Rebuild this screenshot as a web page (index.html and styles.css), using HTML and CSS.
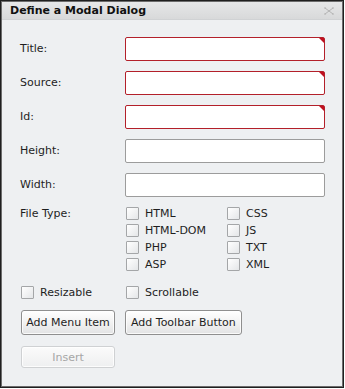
FILE: index.html
```html
<!DOCTYPE html>
<html lang="en">
  <head>
    <meta charset="UTF-8" />
    <title>Define a Modal Dialog</title>
    <link rel="stylesheet" href="styles.css">
  </head>
  <body>
    <div class="dialog">
      <div class="dialog-titlebar">
        <span class="dialog-title">Define a Modal Dialog</span>
        <span class="dialog-close" title="Close">
          <svg width="10" height="8" viewBox="0 0 10 8">
            <path d="M1 1 L9 7 M9 1 L1 7 M0 1 H2 M8 1 H10 M0 7 H2 M8 7 H10" stroke="#b4b4b4" stroke-width="1" fill="none" />
          </svg>
        </span>
      </div>

      <div class="dialog-body">
        <div class="form-row">
          <label class="form-label">Title:</label>
          <div class="field required"><input type="text" /></div>
        </div>
        <div class="form-row">
          <label class="form-label">Source:</label>
          <div class="field required"><input type="text" /></div>
        </div>
        <div class="form-row">
          <label class="form-label">Id:</label>
          <div class="field required"><input type="text" /></div>
        </div>
        <div class="form-row">
          <label class="form-label">Height:</label>
          <div class="field"><input type="text" /></div>
        </div>
        <div class="form-row">
          <label class="form-label">Width:</label>
          <div class="field"><input type="text" /></div>
        </div>

        <div class="form-row file-types">
          <label class="form-label">File Type:</label>
          <div class="check-grid">
            <label class="check"><span class="box"></span>HTML</label>
            <label class="check"><span class="box"></span>CSS</label>
            <label class="check"><span class="box"></span>HTML-DOM</label>
            <label class="check"><span class="box"></span>JS</label>
            <label class="check"><span class="box"></span>PHP</label>
            <label class="check"><span class="box"></span>TXT</label>
            <label class="check"><span class="box"></span>ASP</label>
            <label class="check"><span class="box"></span>XML</label>
          </div>
        </div>

        <div class="option-row">
          <label class="check option"><span class="box"></span>Resizable</label>
          <label class="check"><span class="box"></span>Scrollable</label>
        </div>

        <div class="button-row">
          <button class="btn btn-wide">Add Menu Item</button>
          <button class="btn">Add Toolbar Button</button>
        </div>
        <div class="button-row">
          <button class="btn btn-wide" disabled>Insert</button>
        </div>
      </div>
    </div>
  </body>
</html>
```

FILE: styles.css
```css
* {
  margin: 0;
  padding: 0;
  box-sizing: border-box;
}

body {
  font-family: "DejaVu Sans", Verdana, sans-serif;
  font-size: 11px;
  color: #1e1e1e;
  background: #ffffff;
}

.dialog {
  width: 344px;
  height: 388px;
  border: 1px solid #1f1f1f;
  box-shadow: inset 0 0 0 1px #6c6c6c;
  background: #eef0f2;
  display: flex;
  flex-direction: column;
  padding: 1px;
}

.dialog-titlebar {
  height: 18px;
  background: linear-gradient(180deg, #e6e7e8 0%, #d8d9da 100%);
  border-bottom: 1px solid #d0d2d4;
  display: flex;
  align-items: center;
  justify-content: space-between;
  padding: 0 8px 0 8px;
}

.dialog-title {
  font-weight: 700;
  font-size: 11px;
  color: #111;
}

.dialog-close {
  display: flex;
  margin-top: 1px;
}

.dialog-body {
  padding: 17px 0 0 18px;
}

.form-row {
  display: grid;
  grid-template-columns: 105px 200px;
  align-items: center;
  margin-bottom: 10px;
}

.form-label {
  color: #1e1e1e;
  margin-top: -2px;
}

.field {
  position: relative;
  height: 24px;
}

.field input {
  width: 100%;
  height: 100%;
  border: 1px solid #9c9c9c;
  border-radius: 2px;
  background: #ffffff;
  outline: none;
  font: inherit;
  padding: 0 4px;
}

.field.required input {
  border-color: #b3202a;
}

.field.required::after {
  content: "";
  position: absolute;
  top: 1px;
  right: 1px;
  border-top: 5px solid #c01020;
  border-left: 5px solid transparent;
}

.file-types {
  align-items: start;
  margin-top: 3px;
  margin-bottom: 0;
}

.file-types .form-label {
  line-height: 13px;
  margin-top: 0;
}

.check-grid {
  display: grid;
  grid-template-columns: 101px 1fr;
  row-gap: 4px;
}

.check {
  display: flex;
  align-items: center;
  height: 13px;
  line-height: 13px;
  margin-left: 1px;
}

.box {
  width: 13px;
  height: 13px;
  border: 1px solid #a4a6a8;
  border-radius: 1px;
  background: linear-gradient(135deg, #ffffff 0%, #e4e6e8 100%);
  margin-right: 6px;
  flex: none;
}

.option-row {
  display: flex;
  margin-top: 15px;
  height: 14px;
}

.option-row .option {
  width: 104px;
  margin-left: 1px;
}

.button-row {
  display: flex;
  gap: 10px;
  margin-top: 10px;
  margin-left: 1px;
}

.btn {
  font: inherit;
  white-space: nowrap;
  height: 25px;
  padding: 0 5px;
  color: #1e1e1e;
  border: 1px solid #8f8f8f;
  border-radius: 3px;
  background: linear-gradient(180deg, #ffffff 0%, #f2f2f2 50%, #e2e3e4 100%);
  box-shadow: inset 0 0 0 1px rgba(255, 255, 255, 0.8);
}

.btn-wide {
  width: 94px;
  padding: 0;
}

.btn:disabled {
  height: 22px;
  color: #a6a6a6;
  border-color: #cfd1d3;
  background: linear-gradient(180deg, #fbfbfb 0%, #eeeff0 100%);
  margin-top: 1px;
}
```
